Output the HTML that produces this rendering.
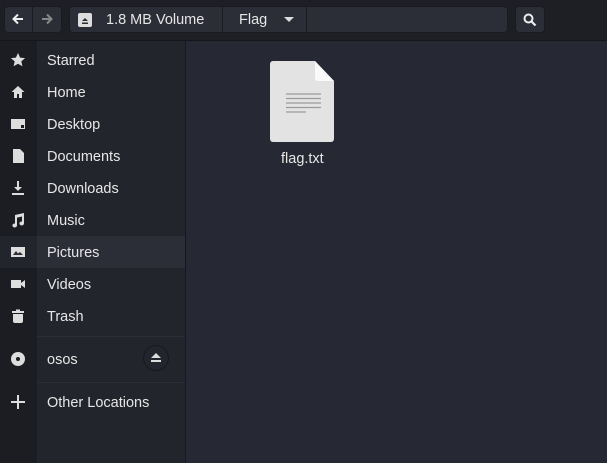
<!DOCTYPE html>
<html><head><style>
body{margin:0;width:607px;height:463px;background:#262833;font-family:"Liberation Sans","DejaVu Sans",sans-serif;color:#e6e6e6;overflow:hidden;position:relative}
.hdr{position:absolute;left:0;top:0;width:607px;height:40px;background:#1e1f25;border-bottom:1px solid #15161a}
.btn{position:absolute;top:6px;height:27px;background:#2b2d37;border:1px solid #1a1b20;border-radius:4px;box-sizing:border-box}
.side{position:absolute;left:0;top:41px;width:185px;height:422px;background:#23252d;border-right:1px solid #17181c}
.strip{position:absolute;left:0;top:41px;width:37px;height:422px;background:#1c1d23}
.row{position:absolute;left:0;width:185px;height:32px;font-size:14.5px;line-height:32px}
.row span{position:absolute;left:47px;top:1px}
.row svg{position:absolute;left:10px;top:8px}
.sep{position:absolute;left:37px;width:148px;height:1px;background:#2d2f38}
</style></head><body>
<div class="hdr"></div>
<div class="btn" style="left:4px;width:58px"></div>
<div style="position:absolute;left:32px;top:7px;width:1px;height:25px;background:#1a1b20"></div>
<svg style="position:absolute;left:11px;top:12px" width="14" height="14" viewBox="0 0 14 14"><path d="M12 7H3M7 2.5L2.5 7 7 11.5" stroke="#eee" stroke-width="2" fill="none"/></svg>
<svg style="position:absolute;left:40px;top:12px" width="14" height="14" viewBox="0 0 14 14"><path d="M2 7h9M7 2.5L11.5 7 7 11.5" stroke="#888" stroke-width="2" fill="none"/></svg>
<div class="btn" style="left:69px;width:439px"></div>
<div style="position:absolute;left:222px;top:7px;width:1px;height:25px;background:#1a1b20"></div>
<div style="position:absolute;left:306px;top:7px;width:1px;height:25px;background:#1a1b20"></div>
<div style="position:absolute;left:78px;top:13px;width:14px;height:14px;background:#ddd;border-radius:2px"></div>
<svg style="position:absolute;left:78px;top:13px" width="14" height="14"><path d="M4 8L7 5 10 8Z M4 9.5h6v1.5H4z" fill="#2b2d37"/></svg>
<div style="position:absolute;left:106px;top:12px;font-size:14.5px">1.8 MB Volume</div>
<div style="position:absolute;left:239px;top:12px;font-size:14.5px">Flag</div>
<svg style="position:absolute;left:284px;top:17px" width="10" height="6"><path d="M0 0h10L5 5z" fill="#ddd"/></svg>
<div class="btn" style="left:515px;width:30px"></div>
<svg style="position:absolute;left:522px;top:12px" width="16" height="16"><circle cx="6.5" cy="6.5" r="4" stroke="#eee" stroke-width="2" fill="none"/><path d="M9.5 9.5L13.5 13.5" stroke="#eee" stroke-width="2.2"/></svg>
<div class="side"></div><div class="strip"></div>
<div class="row" style="top:236px;background:#2c2e37"></div>
<div style="position:absolute;left:0;top:236px;width:37px;height:32px;background:#23252c"></div>
<div class="row" style="top:44px"><svg width="16" height="16"><path d="M8 1l2.1 4.6 5 .5-3.8 3.3 1.1 4.9L8 11.8 3.6 14.3l1.1-4.9L.9 6.1l5-.5z" fill="#ddd"/></svg><span>Starred</span></div>
<div class="row" style="top:76px"><svg width="16" height="16"><path d="M8 2L1.5 8H4v6h3v-4h2v4h3V8h2.5z" fill="#ddd"/></svg><span>Home</span></div>
<div class="row" style="top:108px"><svg width="16" height="16"><path d="M1 3h14v10H1z" fill="#ddd"/><path d="M11 9h3v3h-3z" fill="#1c1d23"/></svg><span>Desktop</span></div>
<div class="row" style="top:140px"><svg width="16" height="16"><path d="M3 1h7l4 4v10H3z" fill="#ddd"/></svg><span>Documents</span></div>
<div class="row" style="top:172px"><svg width="16" height="16"><path d="M7 1h2v6h3l-4 4-4-4h3z M2 13h12v2H2z" fill="#ddd"/></svg><span>Downloads</span></div>
<div class="row" style="top:204px"><svg width="16" height="16"><path d="M5 3l9-2v10.5a2.3 2 0 1 1-2-2V4.5L7 5.6v7.9a2.3 2 0 1 1-2-2z" fill="#ddd"/></svg><span>Music</span></div>
<div class="row" style="top:236px"><svg width="16" height="16"><path d="M1 3h14v10H1z" fill="#ddd"/><path d="M3 11l3-4 2 2.5 2-1.5 3 3z" fill="#2c2e37"/></svg><span>Pictures</span></div>
<div class="row" style="top:268px"><svg width="16" height="16"><path d="M1 4h10v8H1z M11 7l4-3v8l-4-3z" fill="#ddd"/></svg><span>Videos</span></div>
<div class="row" style="top:300px"><svg width="16" height="16"><path d="M2 3h12v2H2z M6 1.5h4v2H6z M3 6h10v7a2 2 0 0 1-2 2H5a2 2 0 0 1-2-2z" fill="#ddd"/></svg><span>Trash</span></div>
<div class="sep" style="top:336px"></div>
<div class="row" style="top:343px"><svg width="16" height="16"><circle cx="8" cy="8" r="7" fill="#ddd"/><circle cx="8" cy="8" r="2" fill="#1c1d23"/></svg><span>osos</span></div>
<div style="position:absolute;left:143px;top:345px;width:26px;height:26px;border:1px solid #17181c;border-radius:50%;box-sizing:border-box"></div>
<svg style="position:absolute;left:150px;top:352px" width="12" height="12"><path d="M1 6L6 1l5 5z M1 8h10v2H1z" fill="#ddd"/></svg>
<div class="sep" style="top:382px"></div>
<div class="row" style="top:386px"><svg width="16" height="16"><path d="M7 1h2v14H7z M1 7h14v2H1z" fill="#ddd"/></svg><span>Other Locations</span></div>
<svg style="position:absolute;left:270px;top:61px" width="64" height="81" viewBox="0 0 64 81"><path d="M3 0h42l19 20v58a3 3 0 0 1-3 3H3a3 3 0 0 1-3-3V3a3 3 0 0 1 3-3z" fill="#e3e3e3"/><path d="M45 0v17a3 3 0 0 0 3 3h16z" fill="#fafafa"/><path d="M16 33h35M16 37.5h35M16 42h35M16 46.5h35M16 51h20" stroke="#9a9a9a" stroke-width="1.3"/></svg>
<div style="position:absolute;left:281px;top:151px;font-size:14.5px">flag.txt</div>
</body></html>
